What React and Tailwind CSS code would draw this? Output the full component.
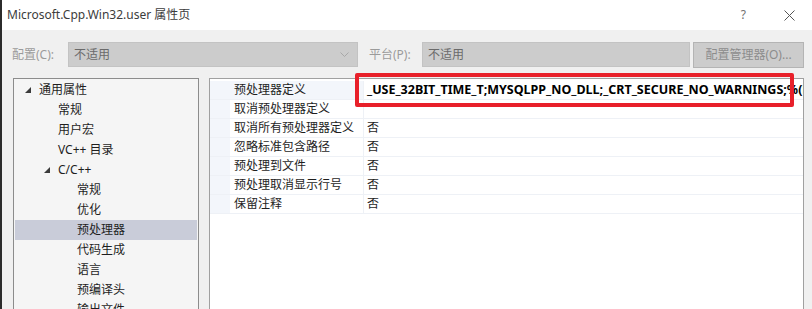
const FONT = { fontFamily: '"Noto Sans", "Noto Sans CJK SC", sans-serif' };

const TREE = [
  { label: "通用属性", level: 0, open: true },
  { label: "常规", level: 1 },
  { label: "用户宏", level: 1 },
  { label: "VC++ 目录", level: 1 },
  { label: "C/C++", level: 1, open: true },
  { label: "常规", level: 2 },
  { label: "优化", level: 2 },
  { label: "预处理器", level: 2, selected: true },
  { label: "代码生成", level: 2 },
  { label: "语言", level: 2 },
  { label: "预编译头", level: 2 },
  { label: "输出文件", level: 2 },
];

const PROPS = [
  { name: "预处理器定义", value: "_USE_32BIT_TIME_T;MYSQLPP_NO_DLL;_CRT_SECURE_NO_WARNINGS;%(PreprocessorDefinitions)", bold: true },
  { name: "取消预处理器定义", value: "" },
  { name: "取消所有预处理器定义", value: "否" },
  { name: "忽略标准包含路径", value: "否" },
  { name: "预处理到文件", value: "否" },
  { name: "预处理取消显示行号", value: "否" },
  { name: "保留注释", value: "否" },
];

const INDENT = ["pl-[10px]", "pl-[29px]", "pl-[48px]"];

function Expander() {
  return (
    <svg width="6" height="6" viewBox="0 0 6 6" className="shrink-0">
      <path d="M6 0 L6 6 L0 6 Z" fill="#3b3b3b" />
    </svg>
  );
}

export default function App() {
  return (
    <div className="w-[812px] h-[309px] overflow-hidden bg-[#f0f0f0] border-l-2 border-[#2b2b2b] text-[12px]" style={FONT}>
      {/* title bar */}
      <div className="h-[30px] bg-white flex items-center pl-[5px] pr-[17px] text-[#3c3c3c]">
        <span className="flex-1">Microsoft.Cpp.Win32.user 属性页</span>
        <span className="text-[#707070] mr-[38px]">?</span>
        <svg width="11" height="11" viewBox="0 0 11 11">
          <path d="M0.5 0.5 L10.5 10.5 M10.5 0.5 L0.5 10.5" stroke="#555" strokeWidth="1" />
        </svg>
      </div>

      {/* config row */}
      <div className="flex items-center h-[25px] mt-[12px] pl-[10px]">
        <span className="w-[56px] text-[#9b9b9b]">配置(C):</span>
        <div className="w-[290px] h-[25px] bg-[#cccccc] border border-[#c3c3c3] flex items-center pl-[5px] pr-[8px] text-[#6a6a6a]">
          <span className="flex-1">不适用</span>
          <svg width="9" height="5" viewBox="0 0 9 5">
            <path d="M0.5 0.5 L4.5 4.5 L8.5 0.5" stroke="#a8a8a8" fill="none" />
          </svg>
        </div>
        <span className="w-[64px] pl-[11px] text-[#9b9b9b]">平台(P):</span>
        <div className="w-[268px] h-[25px] bg-[#cccccc] border border-[#c3c3c3] flex items-center pl-[5px] text-[#6a6a6a]">
          不适用
        </div>
        <div className="ml-[3px] w-[111px] h-[26px] bg-[#cccccc] border border-[#b4b4b4] flex items-center justify-center text-[#8c8c8c]">
          配置管理器(O)...
        </div>
      </div>

      {/* panels */}
      <div className="flex mt-[11px] pl-[11px]">
        <div className="w-[186px] h-[260px] bg-[#f5f5f5] border border-[#8c8c8c] p-[1px] shrink-0">
          {TREE.map((t, i) => (
            <div
              key={i}
              className={`h-[20px] flex items-center text-[#1e1e1e] ${INDENT[t.level]} ${t.selected ? "bg-[#c9ccd9]" : ""}`}
            >
              <span className="w-[14px] shrink-0 flex items-center">{t.open && <Expander />}</span>
              <span className="whitespace-nowrap">{t.label}</span>
            </div>
          ))}
        </div>

        <div className="relative ml-[10px] w-[595px] h-[260px] bg-white border border-[#a0a0a0] pt-[2px]">
          {PROPS.map((p, i) => (
            <div key={i} className="flex h-[19px] border-b border-[#eef1f6]">
              <div className="w-[20px] shrink-0 bg-[#f3f6fb]" />
              <div className={`w-[134px] shrink-0 pl-[4px] flex items-center border-r border-[#eef1f6] text-[#1e1e1e] ${i === 0 ? "bg-[#f3f6fb]" : ""}`}>
                {p.name}
              </div>
              <div className={`flex-1 min-w-0 overflow-hidden whitespace-nowrap pl-[3px] flex items-center text-[#1e1e1e] ${p.bold ? "font-bold text-[12.5px] text-black" : ""}`}>
                {p.value}
              </div>
            </div>
          ))}
          {/* annotation box */}
          <div className="absolute left-[145px] top-[-6px] w-[439px] h-[34px] border-4 border-[#e8202a] rounded-[2px]" />
        </div>
      </div>
    </div>
  );
}
